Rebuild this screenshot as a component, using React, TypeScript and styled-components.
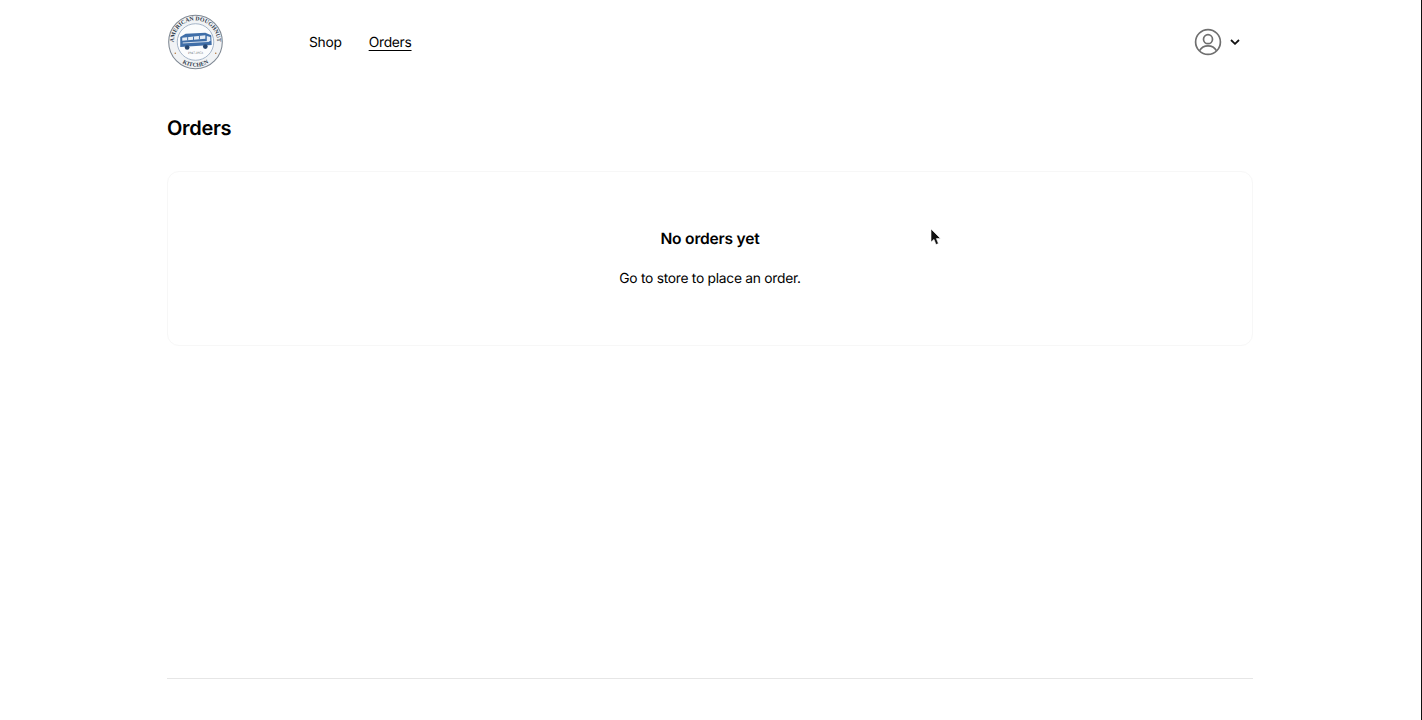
import React from "react";
import styled, { createGlobalStyle } from "styled-components";

const GlobalStyle = createGlobalStyle`
  html, body {
    margin: 0;
    padding: 0;
    background: #ffffff;
  }

  body {
    font-family: Inter, "Liberation Sans", sans-serif;
    color: #000000;
    text-rendering: geometricPrecision;
    -webkit-font-smoothing: antialiased;
  }
`;

function Logo() {
  return (
    <LogoMark viewBox="0 0 56 56" role="img" aria-label="American Doughnut Kitchen">
      <defs>
        <path id="logo-top" d="M7.5 36 A22 22 0 1 1 48.5 36" />
        <path id="logo-bottom" d="M11 46.4 A25 25 0 0 0 45 46.4" />
      </defs>
      <circle cx="28" cy="28" r="27.3" fill="#f1f3f5" stroke="#7f8893" strokeWidth="1.1" />
      <circle cx="28" cy="28" r="18.6" fill="#fbfcfd" stroke="#8ea2ba" strokeWidth="0.8" />
      <text fontFamily="'Liberation Serif', serif" fontSize="5.9" fontWeight="700" fill="#2f3a4a">
        <textPath href="#logo-top" startOffset="50%" textAnchor="middle">
          AMERICAN DOUGHNUT
        </textPath>
      </text>
      <text fontFamily="'Liberation Serif', serif" fontSize="5.9" fontWeight="700" fill="#2f3a4a">
        <textPath href="#logo-bottom" startOffset="50%" textAnchor="middle">
          KITCHEN
        </textPath>
      </text>
      <path d="M12.5 23 L18 19.6 L38 18.5 L44 21 L44.5 31 L12.5 33 Z" fill="#3f6ea8" />
      <path d="M14.5 23.6 L38 21 L38 24.8 L14.5 26.8 Z" fill="#e6edf5" />
      <path d="M20 23 V26.4 M26 22.4 V26 M32 21.8 V25.4" stroke="#3f6ea8" strokeWidth="1" />
      <path d="M15 29 L42 27.4" stroke="#e6edf5" strokeWidth="0.9" />
      <path d="M39.5 22 L43 22.8 L43.2 27 L39.5 27.2 Z" fill="#e6edf5" />
      <circle cx="19.5" cy="33.6" r="2.4" fill="#27466f" />
      <circle cx="38" cy="32.6" r="2.4" fill="#27466f" />
      <text
        x="28"
        y="40.6"
        textAnchor="middle"
        fontFamily="'Liberation Serif', serif"
        fontSize="3.6"
        fill="#4c5561"
      >
        1947-1953
      </text>
      <circle cx="7.4" cy="39.5" r="0.8" fill="#b5793f" />
      <circle cx="48.6" cy="39.5" r="0.8" fill="#b5793f" />
    </LogoMark>
  );
}

function AccountIcon() {
  return (
    <svg width="28" height="28" viewBox="0 0 28 28" fill="none" stroke="#6f6f6f" strokeWidth="1.7">
      <circle cx="14" cy="14" r="12.4" />
      <circle cx="14" cy="11.2" r="4.5" />
      <path d="M5.6 22.6 C7.4 19.4 10.4 17.9 14 17.9 C17.6 17.9 20.6 19.4 22.4 22.6" />
    </svg>
  );
}

function ChevronIcon() {
  return (
    <svg width="10" height="6" viewBox="0 0 10 6" fill="none" stroke="#111111" strokeWidth="1.8">
      <path d="M1 1 L5 4.8 L9 1" />
    </svg>
  );
}

function CursorIcon() {
  return (
    <svg width="12" height="18" viewBox="0 0 12 18">
      <path d="M1 1 L1 14 L4 11.4 L6 16.6 L8.4 15.6 L6.4 10.6 L10.4 10.4 Z" fill="#111111" stroke="#ffffff" strokeWidth="0.6" />
    </svg>
  );
}

export default function App() {
  return (
    <>
      <GlobalStyle />
      <Page>
        <Container>
          <Header>
            <Logo />
            <Nav>
              <NavLink href="#">Shop</NavLink>
              <NavLink href="#" $active>
                Orders
              </NavLink>
            </Nav>
            <Account type="button" aria-label="Account">
              <AccountIcon />
              <ChevronIcon />
            </Account>
          </Header>
          <Main>
            <Heading>Orders</Heading>
            <EmptyCard>
              <EmptyTitle>No orders yet</EmptyTitle>
              <EmptyText>Go to store to place an order.</EmptyText>
            </EmptyCard>
          </Main>
          <Footer />
        </Container>
        <Cursor>
          <CursorIcon />
        </Cursor>
      </Page>
    </>
  );
}

const Page = styled.div`
  position: relative;
  box-sizing: border-box;
  height: 720px;
  overflow: hidden;
  background: #ffffff;
  border-right: 1px solid #111111;
`;

const Container = styled.div`
  box-sizing: border-box;
  width: 1086px;
  height: 100%;
  margin-left: 167px;
  display: flex;
  flex-direction: column;
`;

const Header = styled.header`
  box-sizing: border-box;
  height: 84px;
  padding: 0 13px 0 1px;
  display: flex;
  align-items: center;
`;

const LogoMark = styled.svg`
  width: 55px;
  height: 56px;
  flex-shrink: 0;
`;

const Nav = styled.nav`
  margin-left: 86px;
  padding-top: 1px;
  display: flex;
  gap: 27px;
`;

const NavLink = styled.a<{ $active?: boolean }>`
  font-size: 13.8px;
  line-height: 20px;
  letter-spacing: -0.27px;
  color: #000000;
  text-decoration: ${(props) => (props.$active ? "underline" : "none")};
  text-underline-offset: 3px;
`;

const Account = styled.button`
  margin-left: auto;
  padding: 0;
  border: none;
  background: none;
  display: flex;
  align-items: center;
  gap: 8px;
`;

const Main = styled.main`
  flex: 1;
  padding-top: 30px;
`;

const Heading = styled.h1`
  margin: 0 0 29px;
  font-size: 20px;
  line-height: 28px;
  letter-spacing: -0.3px;
  font-weight: 600;
`;

const EmptyCard = styled.section`
  box-sizing: border-box;
  height: 175px;
  border: 1px solid #f7f7f7;
  border-radius: 12px;
  padding-top: 56px;
  display: flex;
  flex-direction: column;
  align-items: center;
`;

const EmptyTitle = styled.h2`
  margin: 0 0 18px;
  font-size: 15.6px;
  line-height: 22px;
  letter-spacing: -0.22px;
  font-weight: 600;
`;

const EmptyText = styled.p`
  margin: 0;
  font-size: 13.8px;
  line-height: 22px;
  letter-spacing: -0.27px;
`;

const Footer = styled.footer`
  height: 41px;
  border-top: 1px solid #e6e6e6;
`;

const Cursor = styled.div`
  position: absolute;
  left: 930px;
  top: 228px;
  line-height: 0;
`;
